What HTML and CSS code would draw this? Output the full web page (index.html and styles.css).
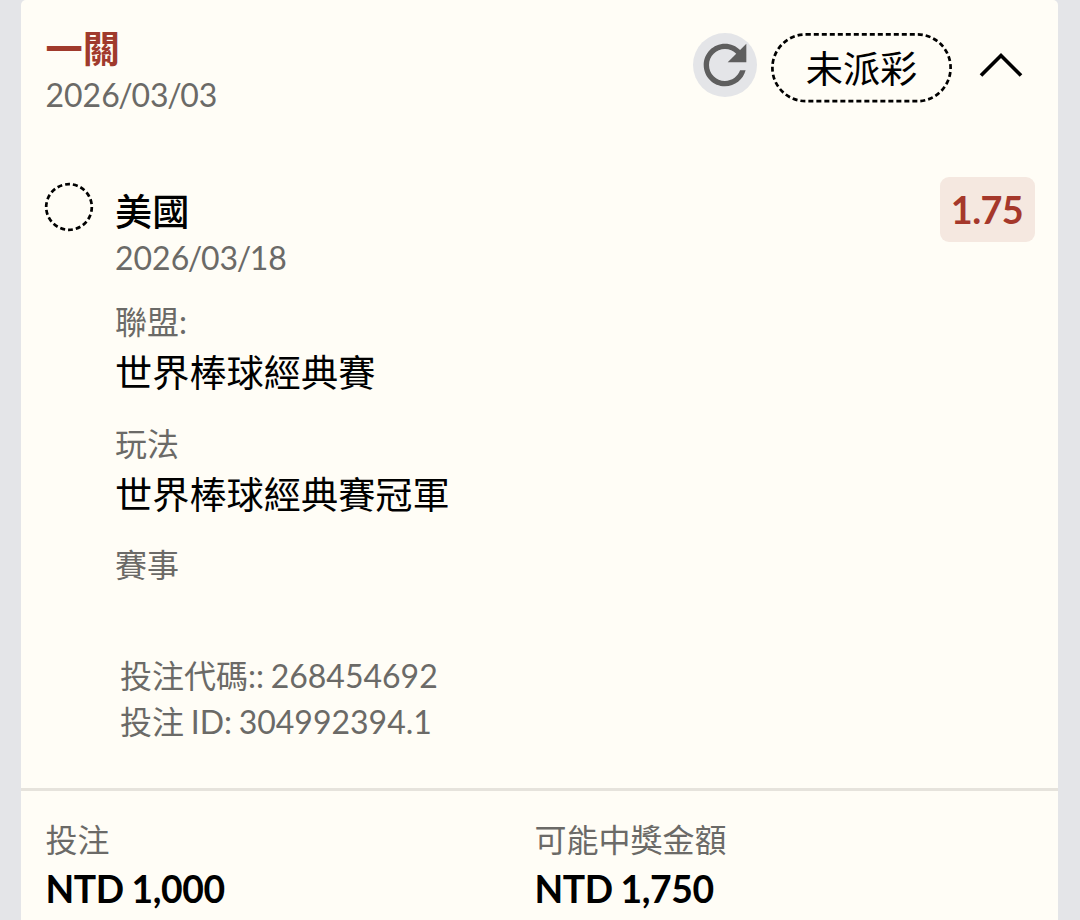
FILE: index.html
```html
<!DOCTYPE html>
<html lang="zh-TW">
  <head>
    <meta charset="utf-8">
    <title>投注紀錄</title>
    <link rel="stylesheet" href="styles.css">
  </head>
  <body>
    <div class="card">
      <div class="header">
        <div class="header-text">
          <div class="title">一關</div>
          <div class="date">2026<i>/</i>03<i>/</i>03</div>
        </div>
        <div class="refresh">
          <svg width="64" height="64" viewBox="0 0 24 24">
            <path fill="#5e5e5e" d="M17.65 6.35C16.2 4.9 14.21 4 12 4c-4.42 0-7.99 3.58-7.99 8s3.57 8 7.99 8c3.73 0 6.84-2.55 7.73-6h-2.08c-.82 2.33-3.04 4-5.65 4-3.31 0-6-2.69-6-6s2.69-6 6-6c1.66 0 3.14.69 4.22 1.78L13 11h7V4l-2.35 2.35z"/>
          </svg>
        </div>
        <div class="status">
          <svg class="status-border" width="181" height="70">
            <rect x="1.4" y="1.4" width="178.2" height="66.8" rx="33.4"/>
          </svg>
          <span>未派彩</span>
        </div>
        <svg class="arrow" width="44" height="26" viewBox="0 0 44 26">
          <path d="M2 23.5 22 3.5l20 20"/>
        </svg>
      </div>

      <div class="bet">
        <svg class="circle" width="50" height="50" viewBox="0 0 50 50">
          <circle cx="25" cy="25" r="22.8" pathLength="144"/>
        </svg>
        <div class="bet-info">
          <div class="team">美國</div>
          <div class="date">2026<i>/</i>03<i>/</i>18</div>
          <div class="item">
            <div class="label">聯盟:</div>
            <div class="value">世界棒球經典賽</div>
          </div>
          <div class="item">
            <div class="label">玩法</div>
            <div class="value">世界棒球經典賽冠軍</div>
          </div>
          <div class="item">
            <div class="label">賽事</div>
          </div>
          <div class="code">
            <div>投注代碼:: 268454692</div>
            <div>投注 ID: 304992394.1</div>
          </div>
        </div>
        <div class="odds">1.75</div>
      </div>

      <div class="footer">
        <div class="total">
          <div class="label">投注</div>
          <div class="money">NTD 1,000</div>
        </div>
        <div class="total">
          <div class="label">可能中獎金額</div>
          <div class="money">NTD 1,750</div>
        </div>
      </div>
    </div>
  </body>
</html>
```
FILE: styles.css
```css
* {
  box-sizing: border-box;
  margin: 0;
}
body {
  height: 920px;
  overflow: hidden;
  padding: 0 22px 0 21px;
  background-color: #e4e5e8;
  font: 32px/48px Lato, "Noto Sans CJK TC", sans-serif;
  color: #000;
}
svg {
  display: block;
}
.card {
  height: 960px;
  border-radius: 5px 5px 0 0;
  background-color: #fffdf6;
}
.header {
  display: flex;
  align-items: flex-start;
  height: 177px;
  padding: 27px 35px 0 24.5px;
}
.header-text {
  flex: 1;
}
.title {
  margin-bottom: 1px;
  font-size: 37.2px;
  line-height: 44px;
  font-weight: bold;
  color: #a03a2c;
}
.date {
  line-height: 45px;
  color: #6b6a67;
}
.date i {
  margin: 0 -1.4px;
  font-style: normal;
}
.refresh {
  margin: 6px 14px 0 0;
  border-radius: 50%;
  background-color: #e4e5e8;
}
.status {
  position: relative;
  width: 181px;
  height: 70px;
  margin: 6px 27px 0 0;
  font-size: 37.2px;
  line-height: 71px;
  text-align: center;
}
.status-border {
  position: absolute;
  top: 0;
  left: 0;
}
.status-border rect,
.circle circle {
  fill: none;
  stroke: #000;
  stroke-width: 2.7;
  stroke-dasharray: 5 3;
}
.arrow {
  margin-top: 25px;
}
.arrow path {
  fill: none;
  stroke: #000;
  stroke-width: 3.7;
}
.bet {
  display: flex;
  align-items: flex-start;
  height: 611px;
  padding: 0 23.5px 0 23px;
}
.circle {
  margin: 5px 21px 0 0;
}
.bet-info {
  flex: 1;
  padding-top: 12px;
}
.team {
  font-size: 37.2px;
  line-height: 46px;
  font-weight: 500;
}
.item {
  margin-top: 20.5px;
}
.date + .item {
  margin-top: 18px;
}
.label {
  color: #6b6a67;
}
.value {
  font-size: 37.2px;
  line-height: 53px;
}
.code {
  margin: 63.5px 0 0 5px;
  line-height: 46.5px;
  word-spacing: -1.5px;
  color: #6b6a67;
}
.odds {
  width: 95px;
  height: 65px;
  border-radius: 9px;
  background-color: #f5e8e0;
  font-size: 37.8px;
  line-height: 65px;
  font-weight: bold;
  letter-spacing: -0.6px;
  text-align: center;
  color: #a5382b;
}
.footer {
  display: grid;
  grid-template-columns: 489px 1fr;
  padding: 25px 24.5px 0;
  border-top: 3px solid #e6e3dc;
}
.money {
  font-size: 37.3px;
  line-height: 49px;
  font-weight: bold;
  letter-spacing: -0.4px;
  word-spacing: -1px;
}
```
